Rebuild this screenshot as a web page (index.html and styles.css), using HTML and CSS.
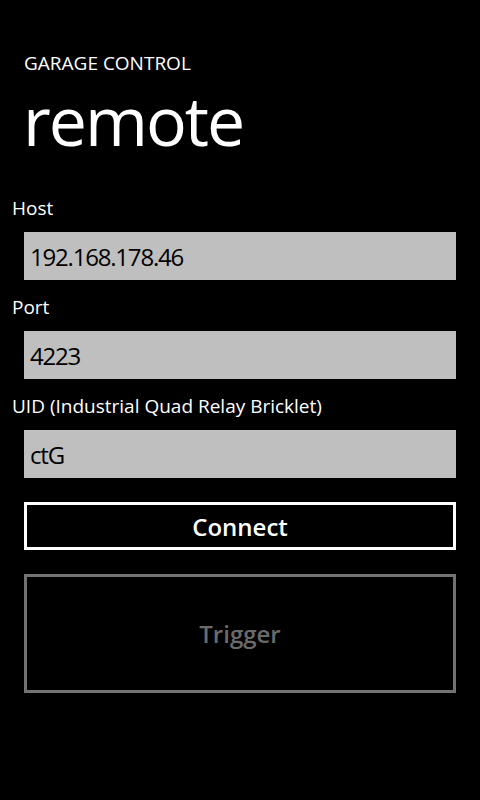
FILE: index.html
```html
<!DOCTYPE html>
<html>
<head>
<meta charset="utf-8">
<link rel="stylesheet" href="styles.css">
</head>
<body>
<div class="page">
  <header class="title-panel">
    <div class="app-title">GARAGE CONTROL</div>
    <div class="page-title">remote</div>
  </header>
  <main class="content">
    <div class="field">
      <div class="label">Host</div>
      <div class="textbox">192.168.178.46</div>
    </div>
    <div class="field">
      <div class="label">Port</div>
      <div class="textbox">4223</div>
    </div>
    <div class="field">
      <div class="label">UID (Industrial Quad Relay Bricklet)</div>
      <div class="textbox">ctG</div>
    </div>
    <div class="button connect">Connect</div>
    <div class="button trigger">Trigger</div>
  </main>
</div>
</body>
</html>
```

FILE: styles.css
```css
html, body {
  margin: 0;
  padding: 0;
  background: #000;
}
body {
  width: 480px;
  height: 800px;
  color: #fff;
  font-family: "Open Sans", "Noto Sans", sans-serif;
}
.page {
  display: flex;
  flex-direction: column;
}
.title-panel {
  display: flex;
  flex-direction: column;
  padding: 51px 0 0 24px;
}
.app-title {
  font-size: 19px;
  line-height: 24px;
}
.page-title {
  font-size: 68px;
  line-height: 72px;
  letter-spacing: -2px;
  margin-left: -1px;
  margin-top: 9px;
}
.content {
  display: flex;
  flex-direction: column;
  padding: 39px 24px 0 12px;
}
.field {
  display: flex;
  flex-direction: column;
  margin-bottom: 14px;
}
.label {
  font-size: 19px;
  line-height: 26px;
  margin-bottom: 11px;
}
.textbox {
  box-sizing: border-box;
  margin-left: 12px;
  height: 48px;
  background: #bfbfbf;
  color: #000;
  font-size: 24px;
  letter-spacing: -1.2px;
  line-height: 47px;
  padding: 1px 0 0 6px;
}
.button {
  margin-left: 12px;
  box-sizing: border-box;
  display: flex;
  align-items: center;
  justify-content: center;
  border: 3px solid #fff;
  font-size: 24px;
  font-weight: 600;
}
.connect {
  height: 48px;
  margin-top: 10px;
}
.trigger {
  height: 119px;
  margin-top: 24px;
  border-color: #737373;
  color: #6b6b6b;
}
```
